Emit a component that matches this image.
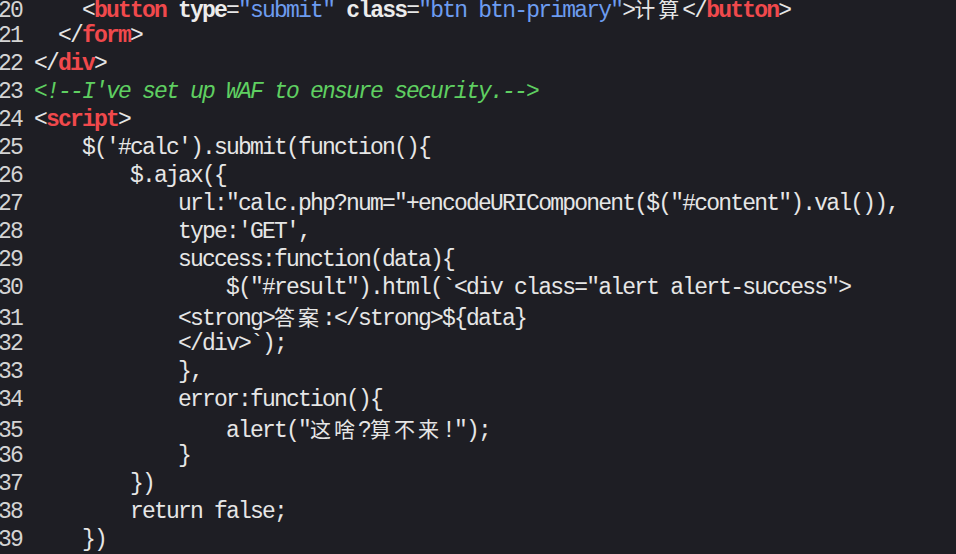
const T = "text-[#f0494c] font-bold"
const A = "text-[#ececec] font-bold"
const S = "text-[#6d9cf0]"
const C = "text-[#5fcf61] italic"
const P = "text-[#e6e6e6]"

type Tok = [string, string?]

const lines: [number, Tok[]][] = [
  [20, [["    <"], ["button", T], [" "], ["type", A], ["="], ['"submit"', S], [" "], ["class", A], ["="], ['"btn btn-primary"', S], [">计算</"], ["button", T], [">"]]],
  [21, [["  </"], ["form", T], [">"]]],
  [22, [["</"], ["div", T], [">"]]],
  [23, [["<!--I've set up WAF to ensure security.-->", C]]],
  [24, [["<"], ["script", T], [">"]]],
  [25, [["    $('#calc').submit(function(){"]]],
  [26, [["        $.ajax({"]]],
  [27, [['            url:"calc.php?num="+encodeURIComponent($("#content").val()),']]],
  [28, [["            type:'GET',"]]],
  [29, [["            success:function(data){"]]],
  [30, [['                $("#result").html(`<div class="alert alert-success">']]],
  [31, [["            <strong>答案:</strong>${data}"]]],
  [32, [["            </div>`);"]]],
  [33, [["            },"]]],
  [34, [["            error:function(){"]]],
  [35, [['                alert("这啥?算不来!");']]],
  [36, [["            }"]]],
  [37, [["        })"]]],
  [38, [["        return false;"]]],
  [39, [["    })"]]],
]

function Piece({ text, cls }: { text: string; cls?: string }) {
  const parts = text.split(/([\u4e00-\u9fff]+)/)
  return (
    <span className={cls ?? P}>
      {parts.map((p, i) =>
        /[\u4e00-\u9fff]/.test(p) ? (
          <span
            key={i}
            className="font-['Noto_Sans_CJK_SC',sans-serif] text-[21px] tracking-[3px] font-normal"
          >
            {p}
          </span>
        ) : (
          <span key={i}>{p}</span>
        )
      )}
    </span>
  )
}

export default function App() {
  return (
    <div className="w-[956px] h-[554px] overflow-hidden bg-[#1e1e24]">
      <div className="mt-[-6px] ml-[-2px] font-['Liberation_Mono',monospace] text-[23px] tracking-[-1.8px]">
        {lines.map(([n, toks]) => (
          <div key={n} className="h-[28px] leading-[28px] whitespace-pre">
            <span className="text-[#d4d4d4]">{n} </span>
            {toks.map(([text, cls], i) => (
              <Piece key={i} text={text} cls={cls} />
            ))}
          </div>
        ))}
      </div>
    </div>
  )
}
